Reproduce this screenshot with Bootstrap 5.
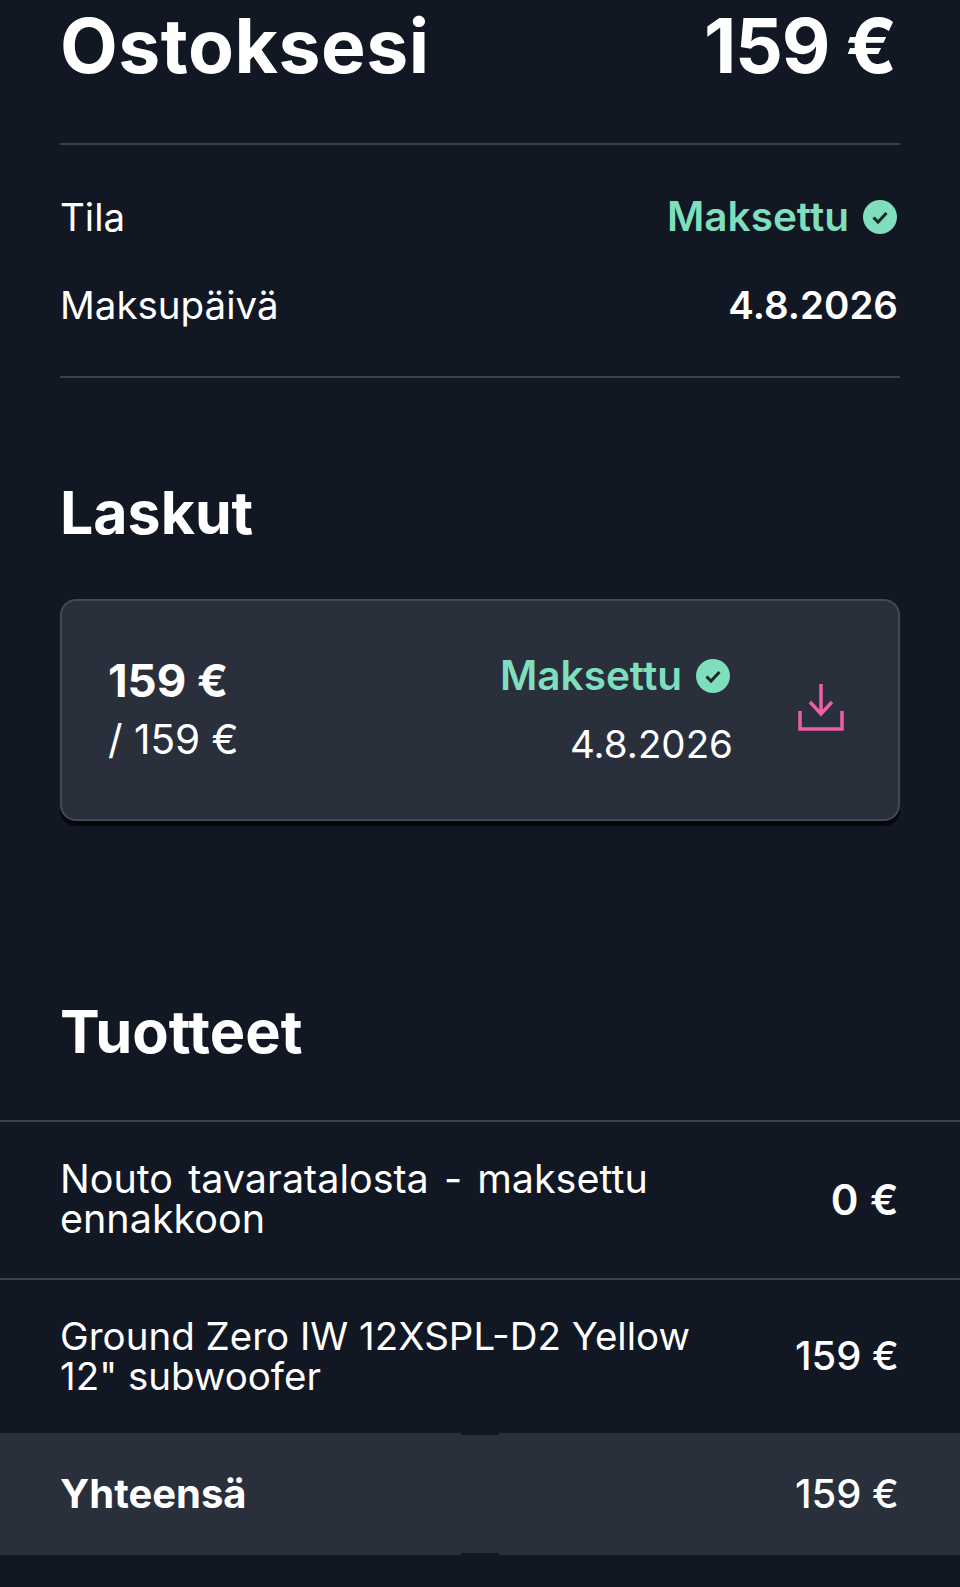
<!doctype html>
<html lang="fi"><head><meta charset="utf-8"><title>Ostoksesi</title>
<link href="https://cdn.jsdelivr.net/npm/bootstrap@5.3.0/dist/css/bootstrap.min.css" rel="stylesheet">
<style>
html,body{height:100%}
body{background:#111723;color:#fff;font-family:"Inter","Noto Sans",sans-serif;overflow:hidden;font-size:38.500px}
.pg{padding:0 60px}
.ttl{box-sizing:content-box;height:143px;font-size:75px;line-height:91px;font-weight:700;border-bottom:2px solid #3a414e;letter-spacing:.5px}
.ttl .sum{padding-right:4px;letter-spacing:-1.200px}
.info{height:233px;border-bottom:2px solid #3a414e;padding-top:48px}
.info .ln{height:88px;line-height:48px}
.ok{color:#7fdfbd;font-weight:600;font-size:40.500px;padding-right:3px}
.strong{font-weight:700}
.semi{font-weight:600;padding-right:2px}
.chk{width:34px;height:34px;flex:none}
.h2x{font-size:59px;font-weight:700;line-height:70px;margin:0}
.tuot{font-size:59.500px;margin-top:175px}
.lask{margin-top:100px}
.cardx{margin-top:51px;height:222px;background:#29303c;border:2px solid #434955;border-radius:16px;box-shadow:0 5px 0 #05070b;padding:0 54px 0 46px}
.cola>div{line-height:59px}
.cola .strong{font-size:45.500px}
.cola .thin{font-size:40.500px}
.colb>div{line-height:68px}
.prod{margin-top:54px}
.rw{border-top:2px solid #3a414e;height:158px;padding:0 60px}
.rw .nm{line-height:40px;max-width:660px;padding-bottom:1px}
.rw .wide{word-spacing:4px;font-size:39.500px;padding-bottom:3px}
.rw:last-child{height:155px}
.tot{height:122px;background:#29303c;padding:0 60px;position:relative;font-size:40px}
.nt{position:absolute;left:461px;width:38px;height:2px;background:#111723}
.nt.a{top:0}.nt.b{bottom:0}
.amt{font-weight:500;font-size:40px;padding-right:1px}
.rw .amt{padding-bottom:2px}
.rw .zero{font-size:42px;font-weight:600;letter-spacing:.5px}
.gapi{gap:65px}
.gapc{gap:14px}
.dl{margin-bottom:6px}
</style></head><body>
<div class="pg">
<div class="d-flex justify-content-between ttl"><span>Ostoksesi</span><span class="sum">159 €</span></div>
<div class="info">
<div class="ln d-flex justify-content-between"><span>Tila</span><span class="ok d-flex gapc align-items-center align-self-start">Maksettu <svg class="chk" viewBox="0 0 34 34"><circle cx="17" cy="17" r="17" fill="#7fdfbd"/><path d="M10.500 17.500l4.500 4.500 8.500-9" fill="none" stroke="#1c2430" stroke-width="3"/></svg></span></div>
<div class="ln d-flex justify-content-between"><span>Maksupäivä</span><span class="semi">4.8.2026</span></div>
</div>
<h2 class="h2x lask">Laskut</h2>
<div class="cardx d-flex align-items-center justify-content-between">
<div class="cola"><div class="strong">159 €</div><div class="thin">/ 159 €</div></div>
<div class="d-flex align-items-center gapi">
<div class="colb text-end"><div class="ok d-flex gapc align-items-center">Maksettu <svg class="chk" viewBox="0 0 34 34"><circle cx="17" cy="17" r="17" fill="#7fdfbd"/><path d="M10.500 17.500l4.500 4.500 8.500-9" fill="none" stroke="#1c2430" stroke-width="3"/></svg></div><div>4.8.2026</div></div>
<svg class="dl" width="46" height="47" viewBox="0 0 46 47" fill="none" stroke="#ee5fa7" stroke-width="3.500"><path d="M23 0v30M12 18l11 12 11-12M2 27v18h42V27"/></svg>
</div></div>
<h2 class="h2x tuot">Tuotteet</h2>
</div>
<div class="prod">
<div class="rw d-flex justify-content-between align-items-center"><div class="nm wide">Nouto tavaratalosta - maksettu ennakkoon</div><div class="amt zero">0 €</div></div>
<div class="rw d-flex justify-content-between align-items-center"><div class="nm">Ground Zero IW 12XSPL-D2 Yellow 12" subwoofer</div><div class="amt">159 €</div></div>
</div>
<div class="tot d-flex justify-content-between align-items-center"><span class="nt a"></span><span class="strong">Yhteensä</span><span class="amt">159 €</span><span class="nt b"></span></div>
</body></html>
